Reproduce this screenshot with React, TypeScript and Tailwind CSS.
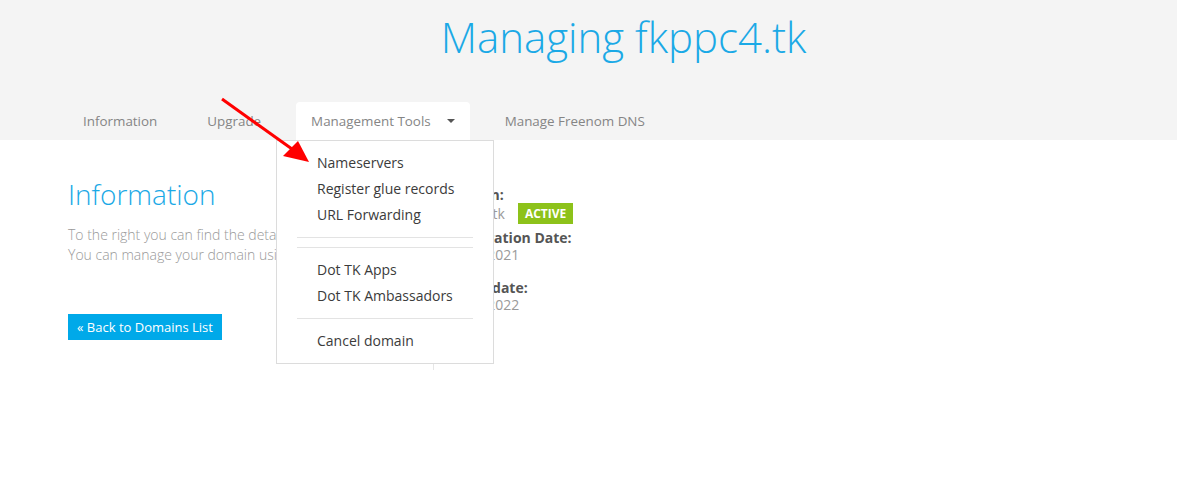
import React from "react";

const tabs = ["Information", "Upgrade"];

const menuGroups = [
  ["Nameservers", "Register glue records", "URL Forwarding"],
  [],
  ["Dot TK Apps", "Dot TK Ambassadors"],
  ["Cancel domain"],
];

const Dropdown = () => (
  <div className="absolute left-[276px] top-[38px] w-[218px] h-[224px] bg-white border border-[#dcdcdc] pt-[9px] z-10">
    {menuGroups.map((group, i) => (
      <div key={i}>
        {i > 0 && <div className="mx-[20px] my-[9px] h-px bg-[#e3e3e3]" />}
        {group.map((item) => (
          <div key={item} className="pl-[40px] h-[26px] leading-[26px] text-[14px] text-[#3b3b3b]">
            {item}
          </div>
        ))}
      </div>
    ))}
  </div>
);

export default function App() {
  return (
    <div className="relative min-h-[486px] bg-white font-['Open_Sans',sans-serif]">
      <header className="bg-[#f4f4f4] h-[140px] flex flex-col">
        <h1 className="pl-[70px] mt-[7px] text-center text-[42px] leading-[60px] font-light text-[#1ba9e6]">
          Managing fkppc4.tk
        </h1>
        <nav className="relative z-10 mt-auto pl-[68px] flex gap-5 h-[38px] text-[13.4px] text-[#858585]">
          {tabs.map((t) => (
            <div key={t} className="px-[15px] leading-[38px]">
              {t}
            </div>
          ))}
          <div className="px-[15px] bg-white rounded-t-[4px] flex items-center gap-[16px]">
            <span>Management Tools</span>
            <span className="w-0 h-0 border-l-[4px] border-r-[4px] border-t-[4px] border-l-transparent border-r-transparent border-t-[#555]" />
          </div>
          <div className="px-[15px] leading-[38px]">Manage Freenom DNS</div>
          <Dropdown />
        </nav>
      </header>

      <main className="pl-[68px] pt-[36px] flex">
        <div className="w-[365px]">
          <h2 className="text-[28px] leading-[36px] font-light text-[#1ba9e6]">Information</h2>
          <p className="mt-[13px] text-[14px] leading-[20px] text-[#999] font-light">
            To the right you can find the details of your domain.
            <br />
            You can manage your domain using the tabs above.
          </p>
          <button className="mt-[49px] h-[26px] px-[9px] bg-[#00a9e9] text-white text-[13px] leading-[26px]">
            « Back to Domains List
          </button>
        </div>
        <div className="border-l border-[#e6e6e6] h-[194px] pl-[11px] pt-[11px] text-[14px]">
          <div className="leading-[16px] font-bold text-[#555]">Domain:</div>
          <div className="h-[21px] flex items-center text-[#9a9a9a]">
            <span>fkppc4.tk</span>
            <span className="ml-[13px] h-[21px] px-[7px] bg-[#8dc21a] text-white text-[12px] font-bold leading-[21px]">
              ACTIVE
            </span>
          </div>
          <div className="mt-[5px] leading-[17px] font-bold text-[#555]">Registration Date:</div>
          <div className="leading-[17px] text-[#9a9a9a]">16/12/2021</div>
          <div className="mt-[16px] leading-[17px] font-bold text-[#555]">Expiry date:</div>
          <div className="leading-[17px] text-[#9a9a9a]">16/12/2022</div>
        </div>
      </main>

      <svg className="absolute inset-0 z-20 pointer-events-none" width="1177" height="486">
        <line x1="222" y1="99" x2="292" y2="149" stroke="#f00" strokeWidth="3" />
        <polygon points="309,162 283,156 298,141" fill="#f00" />
      </svg>
    </div>
  );
}
